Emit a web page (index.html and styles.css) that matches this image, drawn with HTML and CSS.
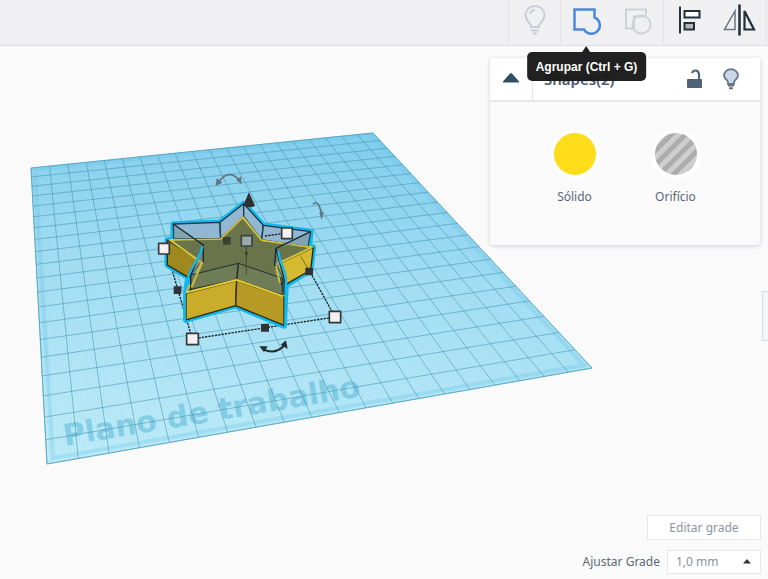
FILE: index.html
```html
<!DOCTYPE html>
<html lang="pt">
<head>
<meta charset="utf-8">
<meta name="viewport" content="width=device-width, initial-scale=1">
<title>Plano de trabalho</title>
<link rel="stylesheet" href="styles.css">
</head>
<body>
<header class="toolbar">
  <div class="group">
    <button class="tool" type="button" aria-label="Mostrar">
      <svg width="52" height="44" viewBox="0 0 52 44" fill="none" stroke="#c9ced6" stroke-width="2">
        <path d="M22 27v-2c-2-3-5.500-5-5.500-10a9.500 9 0 0 1 19 0c0 5-3.500 7-5.500 10v2z"/>
        <path d="M21 14q1-4 5-4M22 30.500h8M24 33.500h4"/>
      </svg>
    </button>
  </div>
  <div class="group">
    <button class="tool" type="button" aria-describedby="tip" aria-label="Agrupar">
      <svg width="52" height="44" viewBox="0 0 52 44" fill="none" stroke="#4a89dc" stroke-width="2.500">
        <path d="M13.500 9.500h20v7.800a8.500 8.500 0 1 1-10.500 12.200h-9.500z"/>
      </svg>
      <span class="tooltip" id="tip" role="tooltip">Agrupar (Ctrl + G)</span>
    </button>
    <button class="tool" type="button" aria-label="Desagrupar">
      <svg width="52" height="44" viewBox="0 0 52 44" fill="none" stroke="#cdd2d8" stroke-width="2">
        <path d="M21 28.500h-7v-19h20v6"/><circle cx="29.500" cy="24.500" r="9"/><path d="M22 28.500v-12h11.500"/>
      </svg>
    </button>
  </div>
  <div class="group">
    <button class="tool" type="button" aria-label="Alinhar">
      <svg width="52" height="44" viewBox="0 0 52 44" fill="none" stroke="#23303a" stroke-width="2">
        <path d="M16 6.500v27"/><path fill="#fff" d="M20.500 11h15v6.500h-15z"/><path fill="#b2b7bc" d="M20.500 23h9.500v6.500h-9.500z"/>
      </svg>
    </button>
    <button class="tool" type="button" aria-label="Espelhar">
      <svg width="52" height="44" viewBox="0 0 52 44" fill="none" stroke="#222e38">
        <path stroke-width="2.500" d="M24.500 4.500v31"/><path stroke="#69747c" stroke-width="1.500" d="M20 11v18.500H9.500z"/><path stroke-width="2.200" d="M29.500 11v18.500h9.500z"/>
      </svg>
    </button>
  </div>
</header>
<main class="viewport">
  <svg class="scene" viewBox="0 46 768 533" preserveAspectRatio="xMinYMin meet" aria-label="Plano de trabalho">
    <defs>
      <linearGradient id="plane" x1=".5" y1="0" x2=".35" y2="1">
        <stop offset="0" stop-color="#8ad5f4"/><stop offset=".4" stop-color="#a9e2f6"/><stop offset="1" stop-color="#c2eefa"/>
      </linearGradient>
    </defs>
    <path fill="url(#plane)" stroke="#83c9e0" d="M31 168L373 133L592 368L47 464z"/>
    <path id="fine" class="fine"/>
    <path id="edge" class="edge"/>
    <text class="plane-name" transform="translate(65 446) rotate(-9.500)">Plano de trabalho</text>
    <path id="coarse" class="coarse"/>
    <g transform="translate(150 160) scale(.3333)" stroke-linejoin="round">
      <g fill="none" stroke="#1b2528" stroke-width="4" stroke-dasharray="7 3">
        <path d="M62 315L127 537L555 471L480 335"/>
      </g>
      <path fill="#25bfee" stroke="#12b9ee" stroke-width="17" d="M70 192L210 187L281 131L340 196L482 215L478 258L490 262L482 330L408 375L402 498L257 437L108 480L108 396L114 352L52 315L52 240L70 236z"/>
      <path fill="#9f891f" stroke="#222817" stroke-width="4" d="M52 240L155 305L116 353L52 315z"/>
      <path fill="#d5b92e" stroke="#222817" stroke-width="4" d="M380 315L490 262L482 330L408 373z"/>
      <path fill="#69744b" stroke="#d8c43c" stroke-width="6" d="M60 240L212 236L278 172L335 240L486 262L375 315L402 410L260 362L108 398L155 308z"/>
      <g fill="#91b7d3" stroke="#193746" stroke-width="4">
        <path d="M70 192L210 187L212 236L72 236z"/><path d="M210 187L281 131L281 169L212 236z"/>
        <path d="M281 131L340 196L335 240L281 169z"/><path d="M340 196L482 215L474 260L335 240z"/>
      </g>
      <path fill="none" stroke="#d8c43c" stroke-width="5" d="M66 240L212 237L279 171L335 241L478 261"/>
      <path fill="#69744b" d="M74 242L213 240L278 178L333 244L465 263L378 290L378 265L160 255L158 292z"/>
      <path fill="#7799a2" fill-opacity=".65" d="M72 194L160 252L130 236H72zM478 217L378 265L430 252L474 259z"/>
      <path fill="#8096a2" fill-opacity=".5" d="M160 255L122 345L122 390L158 310zM378 265L402 355L398 400L374 315z"/>
      <path fill="#6e7c57" stroke="#222f28" stroke-width="3" d="M122 345L265 310L397 355L397 405L260 359L122 388z"/>
      <path fill="none" stroke="#1b252a" stroke-width="4" d="M70 192L160 255L122 345L122 392M160 255V306M482 215L378 265L402 355V405M378 265L374 315L396 375M265 310L260 360"/>
      <path fill="none" stroke="#cdbb3a" stroke-width="6" d="M157 306L124 382M378 318L390 370"/>
      <path fill="#c9ad2a" stroke="#292b18" stroke-width="4" d="M108 400L260 362L257 437L108 480z"/>
      <path fill="#b69a25" stroke="#292b18" stroke-width="4" d="M260 362L402 410L402 496L257 437z"/>
      <path fill="none" stroke="#e8cb37" stroke-width="6" d="M108 398L260 360L400 409"/>
      <path fill="none" stroke="#12b9ee" stroke-width="7" d="M158 258Q151 283 135 309Q117 337 111 365Q112 383 104 396V484M385 272Q388 301 400 325Q410 347 408 376L406 500"/>
      <path fill="none" stroke="#20231c" stroke-width="4" stroke-dasharray="7 3" d="M345 228L396 221"/>
      <path fill="none" stroke="#434a35" stroke-width="3" d="M289 260V345"/><path fill="#353c2c" d="M284 276h10l-5 16z"/>
      <path fill="none" stroke="#796b25" stroke-width="3" d="M453 290L474 325"/>
      <path fill="#2d2f31" d="M297 97L315 137Q299 148 280 135z"/>
      <g fill="#303335">
        <path d="M71 379h23v23H71zM466 323h23v23h-23zM333 492h24v23h-24z"/><path fill="#394132" d="M219 231h23v23h-23z"/>
      </g>
      <g fill="#f2f0f1" stroke="#363739" stroke-width="5">
        <path d="M26 250h32v32H26zM395 204h32v32h-32zM110 520h35v34h-35zM538 454h34v34h-34z"/><path fill="#9aa9aa" stroke="#394344" d="M274 227h32v31h-32z"/>
      </g>
      <g fill="none" stroke="#62747e" stroke-width="5"><path d="M207 65Q237 25 268 61"/><path d="M489 133Q506 115 515 165"/></g>
      <path fill="#62747e" d="M197 78L200 54L217 68zM275 73L259 61L273 49zM515 180L508 158L521 157z"/>
      <path fill="none" stroke="#252d31" stroke-width="6" d="M341 568Q374 586 404 556"/>
      <path fill="#252d31" d="M328 559L353 559L342 577zM408 541L413 567L392 554z"/>
    </g>
  </svg>
  <section class="panel">
    <header class="panel-head">
      <button class="collapse" type="button" aria-label="Recolher">
        <svg width="18" height="12" viewBox="0 0 18 12"><path fill="#304e65" d="M8 1.500q1-1 2 0l7 8q.5 1-1 1H2q-1.500 0-1-1z"/></svg>
      </button>
      <h2 class="title">Shapes(2)</h2>
      <button class="icon" type="button" aria-label="Bloquear">
        <svg width="18" height="22" viewBox="0 0 18 22"><path fill="#4f6177" d="M2 11h13q1 0 1 1v7q0 1-1 1H2q-1 0-1-1v-7q0-1 1-1z"/><path fill="none" stroke="#4f6177" stroke-width="2.200" d="M13 12V6q-.5-3.500-3.500-3.500Q7 2.500 6 5"/></svg>
      </button>
      <button class="icon" type="button" aria-label="Ocultar">
        <svg width="18" height="22" viewBox="0 0 18 22"><path fill="#c9d8e4" stroke="#687789" stroke-width="1.800" d="M6 16v-2C5 11.500 2 10.500 2 7.500a7 6.300 0 0 1 14 0c0 3-3 4-4 6.500v2z"/><path stroke="#68717d" stroke-width="2" d="M6 17.500h6M7 20.200h4"/></svg>
      </button>
    </header>
    <div class="modes">
      <button class="mode" type="button"><span class="swatch solid"></span>Sólido</button>
      <button class="mode" type="button"><span class="swatch hole"></span>Orifício</button>
    </div>
  </section>
  <button class="drawer" type="button" aria-label="Abrir painel"></button>
  <div class="grid-controls">
    <button class="edit" type="button">Editar grade</button>
    <div class="snap">
      <label for="snap">Ajustar Grade</label>
      <span class="picker">
        <select id="snap"><option>1,0 mm</option></select>
        <svg class="caret" width="8" height="5" viewBox="0 0 8 5"><path fill="#333" d="M4 0l4 4.500H0z"/></svg>
      </span>
    </div>
  </div>
</main>
<script src="grid.js"></script>
</body>
</html>
```
FILE: styles.css
```css
* { box-sizing: border-box; }
body {
  margin: 0;
  min-height: 100vh;
  display: flex;
  flex-direction: column;
  background: #fafafb;
  color: #5d6878;
  font: 12px/16px "Noto Sans", sans-serif;
  overflow: hidden;
}
button { font: inherit; color: inherit; border: 0; padding: 0; background: none; }
svg { display: block; }
.toolbar {
  display: flex;
  justify-content: flex-end;
  height: 46px;
  padding-right: 1px;
  background: #f0f0f3;
  border-bottom: 1px solid #dddee1;
}
.group { display: flex; border-left: 1px solid #e1e2e6; }
.group:last-child { border-right: 1px solid #e1e2e6; }
.tool { position: relative; width: 51px; display: flex; justify-content: center; }
.tool svg { flex: none; }
.tooltip {
  position: absolute;
  z-index: 2;
  top: 52px;
  left: 50%;
  transform: translateX(-50%);
  padding: 7px 9px 6px;
  border-radius: 5px;
  background: rgba(24, 24, 25, .96);
  color: #fff;
  font: bold 12px/16px "Liberation Sans", sans-serif;
  white-space: nowrap;
}
.tooltip::before {
  content: "";
  position: absolute;
  left: 50%;
  bottom: 100%;
  margin-left: -4px;
  border: 4px solid transparent;
  border-top: 0;
  border-bottom: 6px solid #202021;
}
.viewport {
  position: relative;
  flex: 1;
  display: flex;
  flex-direction: column;
  align-items: flex-end;
  justify-content: space-between;
  padding: 12px 7px 5px;
}
.scene { position: absolute; inset: 0; width: 100%; height: 100%; }
.fine { fill: none; stroke: #4aaccc; stroke-width: .5; opacity: .16; }
.edge { fill: none; stroke: #69c5e5; stroke-width: 4; opacity: .3; }
.coarse { fill: none; stroke: #4594ae; stroke-width: .8; opacity: .7; }
.plane-name { font: bold 30px "DejaVu Sans", sans-serif; fill: #5bb9d7; opacity: .55; }
.panel {
  position: relative;
  width: 270px;
  margin-right: 1px;
  border-radius: 3px;
  background: #fafafb;
  box-shadow: 0 1px 4px rgba(60, 60, 100, .22);
}
.panel-head {
  display: flex;
  align-items: center;
  height: 44px;
  padding-right: 20px;
  gap: 18px;
  background: #fff;
  border-bottom: 2px solid #e8e8eb;
}
.collapse {
  display: flex;
  align-items: center;
  justify-content: center;
  align-self: stretch;
  width: 43px;
  padding-bottom: 2px;
  border-right: 1px solid #e4e4e8;
}
.title { flex: 1; margin: 0 0 0 -7px; font-size: 15px; line-height: 20px; font-weight: 600; color: #4c596b; }
.modes { display: flex; justify-content: center; gap: 41px; padding: 27px 0 40px; }
.mode { display: flex; flex-direction: column; align-items: center; width: 60px; gap: 10px; }
.swatch { width: 50px; height: 50px; border: 4px solid #fff; border-radius: 50%; }
.solid { background: #ffdd1b; }
.hole { background: repeating-linear-gradient(135deg, #adadae 0 5px, #cececf 5px 10px); }
.drawer {
  position: absolute;
  right: 0;
  top: 245px;
  width: 6px;
  height: 50px;
  background: #f3f7fa;
  border: 1px solid #d5dde3;
  border-right: 0;
}
.grid-controls { position: relative; display: flex; flex-direction: column; align-items: flex-end; gap: 10px; }
.edit { width: 114px; height: 25px; background: #fff; border: 1px solid #e6e7ec; color: #8e96a1; }
.snap { display: flex; align-items: center; gap: 7px; }
.picker { position: relative; }
.picker select {
  display: block;
  appearance: none;
  width: 94px;
  height: 24px;
  padding: 0 8px;
  border: 1px solid #e6e7ec;
  border-radius: 0;
  background: #fff;
  color: #8b929c;
  font: inherit;
}
.caret { position: absolute; right: 10px; top: 9px; }
```
FILE: grid.js
```js
// Perspective map from the unit square to the corners of the work plane.
const [a, b, c, d] = [[31, 168], [373, 133], [592, 368], [47, 464]];
const sx = a[0] - b[0] + c[0] - d[0], sy = a[1] - b[1] + c[1] - d[1];
const x1 = b[0] - c[0], x2 = d[0] - c[0], y1 = b[1] - c[1], y2 = d[1] - c[1];
const det = x1 * y2 - x2 * y1;
const g = (sx * y2 - x2 * sy) / det, h = (x1 * sy - sx * y1) / det;
function point(u, v) {
  const w = g * u + h * v + 1;
  const at = i => ((b[i] - a[i] + g * b[i]) * u + (d[i] - a[i] + h * d[i]) * v + a[i]) / w;
  return at(0).toFixed(2) + " " + at(1).toFixed(2);
}
function lines(n) {
  let path = "";
  for (let i = 0; i <= n; i++) {
    const t = i / n;
    path += `M${point(t, 0)}L${point(t, 1)}M${point(0, t)}L${point(1, t)}`;
  }
  return path;
}
document.getElementById("fine").setAttribute("d", lines(200));
document.getElementById("coarse").setAttribute("d", lines(20));
document.getElementById("edge").setAttribute("d",
  `M${point(.01, .01)}L${point(.99, .01)}L${point(.99, .99)}L${point(.01, .99)}z`);
```
